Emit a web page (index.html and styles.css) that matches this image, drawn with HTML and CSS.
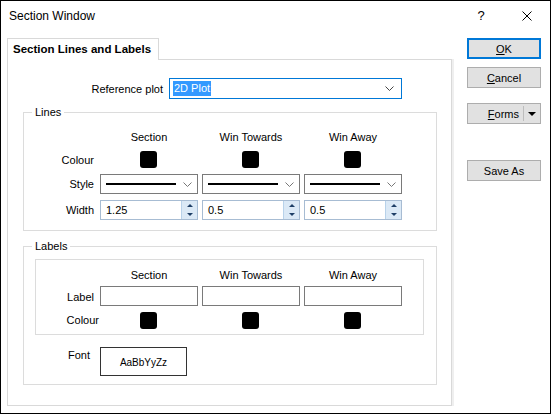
FILE: index.html
```html
<!DOCTYPE html>
<html lang="en">
<head>
    <meta charset="UTF-8">
    <title>Section Window</title>
    <link rel="stylesheet" href="styles.css">
</head>
<body>
    <div class="window">
        <div class="titlebar">
            <span class="title">Section Window</span>
            <span class="help">?</span>
            <span class="close">
                <svg width="10" height="10" viewBox="0 0 10 10"><path d="M0.5 0.5 L9.5 9.5 M9.5 0.5 L0.5 9.5" stroke="#000" stroke-width="1" fill="none"/></svg>
            </span>
        </div>

        <div class="content">
            <div class="tabs">
                <div class="tab-strip">
                    <div class="tab active">Section Lines and Labels</div>
                </div>
                <div class="tab-page">
                    <div class="ref-row">
                        <label class="ref-label">Reference plot</label>
                        <div class="combo ref-combo">
                            <span class="selected">2D Plot</span>
                            <svg class="chevron" width="9" height="5" viewBox="0 0 9 5"><path d="M0.5 0.5 L4.5 4.5 L8.5 0.5" stroke="#444" fill="none"/></svg>
                        </div>
                    </div>

                    <fieldset class="group">
                        <legend>Lines</legend>
                        <div class="grid lines-grid">
                            <span></span>
                            <span class="head">Section</span>
                            <span class="head">Win Towards</span>
                            <span class="head">Win Away</span>

                            <span class="lbl">Colour</span>
                            <span class="cell"><i class="swatch"></i></span>
                            <span class="cell"><i class="swatch"></i></span>
                            <span class="cell"><i class="swatch"></i></span>

                            <span class="lbl">Style</span>
                            <div class="combo style-combo"><span class="line"></span><svg class="chevron" width="9" height="5" viewBox="0 0 9 5"><path d="M0.5 0.5 L4.5 4.5 L8.5 0.5" stroke="#777" fill="none"/></svg></div>
                            <div class="combo style-combo"><span class="line"></span><svg class="chevron" width="9" height="5" viewBox="0 0 9 5"><path d="M0.5 0.5 L4.5 4.5 L8.5 0.5" stroke="#777" fill="none"/></svg></div>
                            <div class="combo style-combo"><span class="line"></span><svg class="chevron" width="9" height="5" viewBox="0 0 9 5"><path d="M0.5 0.5 L4.5 4.5 L8.5 0.5" stroke="#777" fill="none"/></svg></div>

                            <span class="lbl">Width</span>
                            <div class="spin"><span class="value">1.25</span><span class="spin-btns"><i class="up"></i><i class="down"></i></span></div>
                            <div class="spin"><span class="value">0.5</span><span class="spin-btns"><i class="up"></i><i class="down"></i></span></div>
                            <div class="spin"><span class="value">0.5</span><span class="spin-btns"><i class="up"></i><i class="down"></i></span></div>
                        </div>
                    </fieldset>

                    <fieldset class="group labels-group">
                        <legend>Labels</legend>
                        <div class="inner-box">
                            <div class="grid labels-grid">
                                <span></span>
                                <span class="head">Section</span>
                                <span class="head">Win Towards</span>
                                <span class="head">Win Away</span>

                                <span class="lbl">Label</span>
                                <span class="textbox"></span>
                                <span class="textbox"></span>
                                <span class="textbox"></span>

                                <span class="lbl lbl-wide">Colour</span>
                                <span class="cell"><i class="swatch"></i></span>
                                <span class="cell"><i class="swatch"></i></span>
                                <span class="cell"><i class="swatch"></i></span>
                            </div>
                        </div>
                        <div class="font-row">
                            <span class="lbl font-lbl">Font</span>
                            <div class="font-box">AaBbYyZz</div>
                        </div>
                    </fieldset>
                </div>
            </div>

            <div class="buttons">
                <button class="btn btn-default"><u>O</u>K</button>
                <button class="btn"><u>C</u>ancel</button>
                <button class="btn btn-split"><span class="split-text"><u>F</u>orms</span><span class="split-sep"></span><span class="split-arrow"></span></button>
                <button class="btn btn-save">Save As</button>
            </div>
        </div>
    </div>
</body>
</html>
```

FILE: styles.css
```css
body {
    margin: 0;
    font-family: "Liberation Sans", Arial, sans-serif;
    font-size: 11px;
    color: #000;
    background: #fff;
}
.window {
    width: 551px;
    height: 414px;
    box-sizing: border-box;
    border: 1px solid #000;
    background: #fff;
    display: flex;
    flex-direction: column;
}
.titlebar {
    height: 29px;
    display: flex;
    align-items: center;
    padding-left: 8px;
    font-size: 12px;
}
.title {
    flex: 1;
}
.help {
    width: 46px;
    text-align: center;
    font-size: 13px;
}
.close {
    width: 46px;
    display: flex;
    justify-content: center;
}
.content {
    display: flex;
    padding: 8px 0 0 6px;
}
.tabs {
    width: 445px;
}
.tab-strip {
    display: flex;
    height: 21px;
}
.tab {
    width: 152px;
    box-sizing: border-box;
    border: 1px solid #d9d9d9;
    border-bottom: none;
    background: #fff;
    font-weight: bold;
    font-size: 11.5px;
    padding: 4px 0 0 5px;
    position: relative;
    z-index: 1;
    height: 22px;
}
.tab-page {
    height: 347px;
    box-sizing: border-box;
    border: 1px solid #d9d9d9;
    box-shadow: 2px 0 0 #efefef;
    padding: 18px 0 0 0;
}
.ref-row {
    display: flex;
    align-items: center;
    gap: 6px;
}
.ref-label {
    width: 155px;
    text-align: right;
}
.combo {
    box-sizing: border-box;
    border: 1px solid #7a7a7a;
    background: #fff;
    display: flex;
    align-items: center;
    position: relative;
}
.ref-combo {
    width: 233px;
    height: 21px;
    border-color: #0078d7;
    padding-left: 3px;
}
.selected {
    background: #3399ff;
    color: #fff;
    line-height: 15px;
    padding: 0 1px;
}
.chevron {
    position: absolute;
    right: 7px;
    top: 7px;
}
.group {
    margin: 5px 0 0 15px;
    width: 414px;
    box-sizing: border-box;
    border: 1px solid #dcdcdc;
    padding: 10px 0 10px 0;
}
.group legend {
    margin-left: 8px;
    padding: 0 3px;
    line-height: 16px;
}
.grid {
    display: grid;
    grid-template-columns: 72px 98px 98px 98px;
    column-gap: 4px;
}
.lines-grid {
    grid-template-rows: 15px 17px 20px 20px;
    row-gap: 6px;
}
.head {
    text-align: center;
    line-height: 15px;
}
.lbl {
    text-align: right;
    padding-right: 2px;
    align-self: center;
}
.cell {
    display: flex;
    justify-content: center;
}
.swatch {
    width: 17px;
    height: 17px;
    background: #000;
    border-radius: 3px;
    margin-left: -1px;
}
.style-combo {
    height: 20px;
}
.line {
    width: 70px;
    height: 2px;
    background: #000;
    margin-left: 5px;
}
.style-combo .chevron {
    right: 5px;
}
.spin {
    height: 20px;
    box-sizing: border-box;
    border: 1px solid #a7bcd3;
    display: flex;
    align-items: center;
}
.value {
    flex: 1;
    padding-left: 5px;
}
.spin-btns {
    width: 16px;
    height: 18px;
    box-sizing: border-box;
    background: #dbe9f6;
    border-left: 1px solid #b8d2ea;
    display: flex;
    flex-direction: column;
    align-items: center;
    justify-content: space-around;
}
.spin-btns i {
    width: 0;
    height: 0;
    border-left: 3px solid transparent;
    border-right: 3px solid transparent;
}
.spin-btns .up {
    border-bottom: 3px solid #1e3f66;
}
.spin-btns .down {
    border-top: 3px solid #1e3f66;
}
.labels-group {
    margin-top: 7px;
    padding: 0 0 8px 0;
}
.inner-box {
    margin: 5px 12px 0 11px;
    border: 1px solid #dcdcdc;
    padding: 7px 0 5px 0;
}
.labels-grid {
    grid-template-columns: 60px 98px 98px 98px;
    grid-template-rows: 16px 23px 23px;
}
.labels-grid .head {
    line-height: 16px;
}
.labels-grid > * {
    align-self: end;
}
.textbox {
    border: 1px solid #7a7a7a;
    height: 20px;
    box-sizing: border-box;
}
.labels-grid .lbl {
    line-height: 18px;
}
.labels-grid .lbl-wide {
    padding-right: 0;
    margin-right: -3px;
    line-height: 17px;
}
.font-row {
    display: flex;
    gap: 4px;
    margin-top: 12px;
}
.font-lbl {
    width: 72px;
    box-sizing: border-box;
    padding: 2px 6px 0 0;
    align-self: flex-start;
}
.font-box {
    width: 87px;
    height: 29px;
    box-sizing: border-box;
    border: 1px solid #333;
    display: flex;
    align-items: center;
    justify-content: center;
    font-size: 10px;
    padding-top: 2px;
}
.buttons {
    display: flex;
    flex-direction: column;
    margin-left: 15px;
}
.btn {
    width: 74px;
    height: 21px;
    box-sizing: border-box;
    border: 1px solid #adadad;
    background: #e1e1e1;
    font-family: inherit;
    font-size: 11px;
    color: #000;
    padding: 0;
    margin: 0 0 8px 0;
}
.btn-default {
    border: 2px solid #0078d7;
}
.btn-split {
    margin-top: 7px;
    display: flex;
    align-items: center;
}
.split-text {
    flex: 1;
    text-align: right;
    padding-right: 4px;
}
.split-sep {
    width: 1px;
    height: 15px;
    background: #bdbdbd;
}
.split-arrow {
    width: 0;
    height: 0;
    border-left: 4px solid transparent;
    border-right: 4px solid transparent;
    border-top: 4px solid #000;
    margin: 0 4px 0 4px;
}
.btn-save {
    margin-top: 28px;
}
```
